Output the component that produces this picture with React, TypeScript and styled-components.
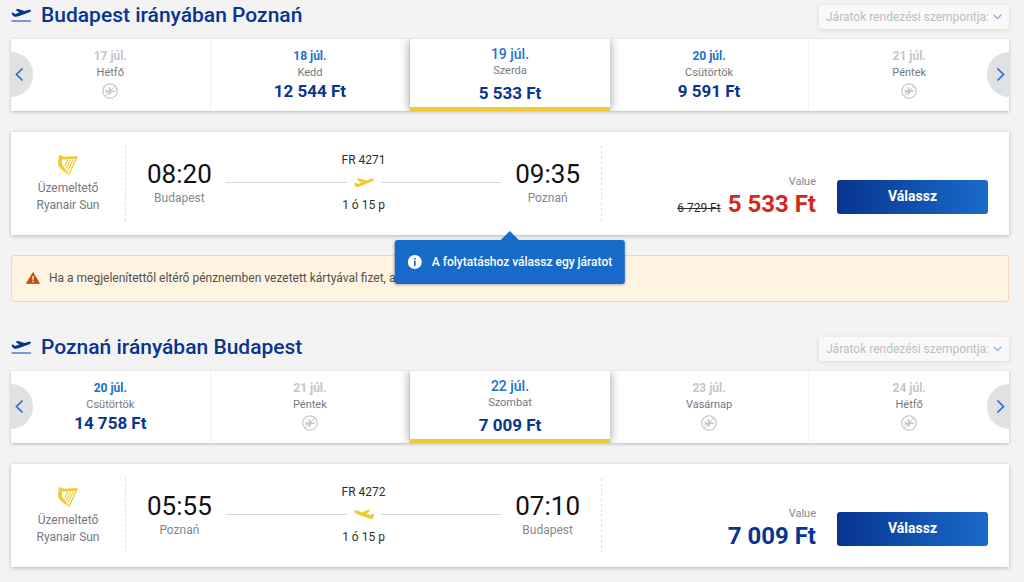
import React from "react";
import styled, { createGlobalStyle, css } from "styled-components";

const GlobalStyle = createGlobalStyle`
  * { box-sizing: border-box; }
  body {
    margin: 0;
    background: #f3f3f3;
    font-family: Roboto, "Liberation Sans", sans-serif;
    color: #2e2e2e;
  }
  h2, p { margin: 0; }
  button, select { font-family: inherit; }
`;

const Page = styled.main`
  display: flex;
  flex-direction: column;
  gap: 30px;
  padding: 0 15px 15px 11px;
`;

const Journey = styled.section`
  display: flex;
  flex-direction: column;
`;

const Header = styled.header`
  display: flex;
  align-items: flex-start;
  justify-content: space-between;
  height: 39px;
`;

const Title = styled.h2`
  display: flex;
  align-items: center;
  gap: 9px;
  padding-top: 2px;
  font-size: 21px;
  line-height: 26px;
  font-weight: 500;
  color: #073590;
`;

const SortBox = styled.label`
  display: flex;
  align-items: center;
  position: relative;
  margin-top: 5px;
  opacity: 0.5;
  border-radius: 2px;
  background: #fff;
  box-shadow: 0 1px 4px rgba(0, 0, 0, 0.2);

  svg {
    position: absolute;
    right: 7px;
    pointer-events: none;
  }
`;

const SortSelect = styled.select`
  appearance: none;
  width: 190px;
  height: 24px;
  padding: 0 12px 0 7px;
  border: 0;
  background: transparent;
  font-size: 12px;
  color: #84888f;
  opacity: 1;
`;

const Carousel = styled.div`
  position: relative;
  box-shadow: 0 1px 3px rgba(0, 0, 0, 0.25);
  background: #fff;
`;

const Days = styled.div`
  display: grid;
  grid-template-columns: repeat(5, 1fr);
  height: 72px;
  overflow: hidden;
`;

const Day = styled.button<{ $selected?: boolean }>`
  display: flex;
  flex-direction: column;
  align-items: center;
  padding: 8px 0 0;
  border: 0;
  border-right: 1px solid #f3f3f3;
  background: #fff;

  &:last-child { border-right: 0; }

  ${(p) =>
    p.$selected &&
    css`
      z-index: 1;
      padding-top: 6px;
      border-right: 0;
      border-bottom: 4px solid #f1c933;
      box-shadow: 0 0 10px rgba(0, 0, 0, 0.4);
    `}
`;

const DayDate = styled.span<{ $off?: boolean; $selected?: boolean }>`
  font-size: ${(p) => (p.$selected ? 14 : 12)}px;
  line-height: 18px;
  font-weight: ${(p) => (p.$selected ? 500 : 700)};
  color: ${(p) => (p.$off ? "#c3c6cb" : "#2070cd")};
`;

const DayName = styled.span`
  font-size: 11px;
  line-height: 15px;
  color: #75787f;
`;

const DayPrice = styled.span<{ $selected?: boolean }>`
  margin-top: ${(p) => (p.$selected ? 5 : 1)}px;
  font-size: 17px;
  line-height: 20px;
  font-weight: 700;
  color: #073590;
`;

const DayUnavailable = styled.span`
  display: flex;
  margin-top: 3px;
`;

const Arrow = styled.button<{ $side: "left" | "right" }>`
  position: absolute;
  z-index: 2;
  top: 13px;
  ${(p) => p.$side}: 0;
  display: flex;
  align-items: center;
  justify-content: ${(p) => (p.$side === "left" ? "flex-start" : "flex-end")};
  width: 22px;
  height: 45px;
  padding: 0 4px;
  border: 0;
  border-radius: ${(p) => (p.$side === "left" ? "0 22px 22px 0" : "22px 0 0 22px")};
  background: #e0e1e3;
`;

const FlightCard = styled.article`
  position: relative;
  display: flex;
  margin-top: 21px;
  height: 103px;
  padding: 14px 21px 14px 0;
  background: #fff;
  box-shadow: 0 1px 4px rgba(0, 0, 0, 0.25);
`;

const Operator = styled.div`
  display: flex;
  flex-direction: column;
  align-items: center;
  flex: 0 0 115px;
  padding-top: 8px;
  border-right: 1px dashed #dedfe1;
  font-size: 12px;
  line-height: 17px;
  color: #75787f;

  svg { margin-bottom: 4px; }
`;

const Route = styled.div`
  display: flex;
  flex: 1 1 476px;
  padding: 0 21px;
  gap: 14px;
  border-right: 1px dashed #dedfe1;
`;

const Stop = styled.div`
  display: flex;
  flex-direction: column;
  align-items: center;
  flex: 0 0 64px;
  padding-top: 13px;
`;

const Time = styled.time`
  font-size: 26px;
  line-height: 30px;
  color: #111;
`;

const City = styled.span`
  margin-top: 1px;
  font-size: 12px;
  line-height: 16px;
  color: #84888f;
`;

const Leg = styled.div`
  display: flex;
  flex-direction: column;
  align-items: center;
  flex: 1;
  padding-top: 6px;
  font-size: 12px;
  line-height: 16px;
`;

const Track = styled.div`
  display: flex;
  align-items: center;
  align-self: stretch;
  gap: 7px;
  height: 29px;

  &::before, &::after {
    content: "";
    flex: 1;
    height: 1px;
    background: #d5d7da;
  }
`;

const Fare = styled.div`
  display: flex;
  align-items: flex-end;
  justify-content: flex-end;
  flex: 1 1 386px;
  gap: 21px;
`;

const PriceBlock = styled.div`
  display: flex;
  flex-direction: column;
  align-items: flex-end;
  padding-bottom: 1px;
`;

const FareName = styled.span`
  font-size: 11px;
  line-height: 13px;
  color: #84888f;
`;

const PriceLine = styled.div`
  display: flex;
  align-items: baseline;
  gap: 7px;
`;

const OldPrice = styled.del`
  font-size: 12px;
  color: #2e2e2e;
`;

const Price = styled.strong<{ $sale?: boolean }>`
  font-size: 24px;
  line-height: 32px;
  font-weight: 700;
  color: ${(p) => (p.$sale ? "#d3281c" : "#073590")};
`;

const SelectButton = styled.button`
  width: 151px;
  height: 34px;
  margin-bottom: 7px;
  padding: 0 0 2px;
  border: 0;
  border-radius: 3px;
  background: linear-gradient(90deg, #073590, #1a6bc9);
  font-size: 14px;
  font-weight: 700;
  color: #fff;
`;

const Tooltip = styled.div`
  position: absolute;
  z-index: 3;
  top: calc(100% + 5px);
  left: 50%;
  transform: translateX(-50%);
  display: flex;
  align-items: center;
  gap: 9px;
  height: 44px;
  padding: 0 13px 0 12px;
  border-radius: 3px;
  background: #176ac8;
  box-shadow: 0 1px 3px rgba(0, 0, 0, 0.3);
  font-size: 12px;
  font-weight: 500;
  white-space: nowrap;
  color: #fff;

  &::before {
    content: "";
    position: absolute;
    bottom: 100%;
    left: 50%;
    margin-left: -9px;
    border: 9px solid transparent;
    border-top: 0;
    border-bottom-color: #176ac8;
  }
`;

const Alert = styled.div`
  display: flex;
  align-items: center;
  gap: 9px;
  height: 47px;
  margin-top: 20px;
  padding: 0 14px 2px;
  border: 1px solid #f2d6bb;
  border-radius: 3px;
  background: #fff3e2;
  font-size: 12px;
  line-height: 16px;
  color: #55504a;
`;

const TakeoffIcon = () => (
  <svg width="21" height="15" viewBox="0 0 21 15" aria-hidden="true">
    <path
      fill="#073590"
      d="M.5 5.1c.5-.6 1.2-.7 1.8-.3l1.9 1.1 4.1-1.3L4.8 1.9C5.3 1 6.5.7 7.4 1.1l6 2 3.5-1.1c1.4-.5 2.8-.4 3.1.3.2.8-.8 1.7-2.2 2.2L8.2 8c-1.6.6-3.9.9-5.2.4C1.7 7.900.9 6.500.5 5.100Z"
    />
    <path fill="#7e98cf" d="M.5 12h19.500v2H.5z" />
  </svg>
);

const PlaneIcon = ({ landing }: { landing?: boolean }) => (
  <svg width="20" height="11" viewBox="0 0 20 11" aria-hidden="true">
    <path
      fill="#f1c933"
      d={
        landing
          ? "M.3 2C.8 1.2 2 1.200 3.500 1.700L8.200 3.200 13.700.9C14.700.5 15.700.7 16.300 1.200L12.800 4.700 16.300 6 18.300 5C19.100 4.700 19.900 5.100 20 5.800L19.200 9.100C18.700 10.200 17.500 10.200 16 9.800L3.300 5.200C1.500 4.500.2 3.300.3 2Z"
          : "M.5 6.500C1 5.700 1.900 5.700 2.700 6.300L4.200 7 7.200 5.800 2.800 2.500C3.400 1.500 4.800 1.200 5.900 1.500L12.300 3.500 16.500 1.900C18 1.300 19.600 1.300 19.900 2.100 20.200 3 19.200 3.900 17.800 4.400L6.300 9.200C4.500 9.900 2.500 10.800 1.600 9.800 1 9.200.6 7.800.5 6.500Z"
      }
    />
  </svg>
);

const HarpIcon = () => (
  <svg width="22" height="22" viewBox="0 0 22 22" fill="none" aria-hidden="true">
    <path
      fill="#f1c933"
      d="M1.800 2.200C2.400.8 4.300.6 5 1.900 8 3.700 13.500 1.700 21.300 2.400 20.800 4.200 18.900 4.900 16.300 4.900 12.500 4.900 8.500 6.300 5.800 5.200 4.500 6.500 4.300 8.500 5.200 10.500 6.800 14 11 17 12.200 21.300 9 18 3.600 16.400 1.500 11.800.4 9 .9 6.600 2.100 4.700 1.200 4.200 1 3 1.800 2.200Z"
    />
    <path
      stroke="#f1c933"
      strokeWidth="1.100"
      d="M10.600 6 7.600 12.600M13.600 5.600 9.300 14.600M16.400 5.200 10.800 16.800"
    />
    <path stroke="#f1c933" strokeWidth="1.300" d="M19.400 4.200 12.100 20.400" />
  </svg>
);

const NoFlightIcon = () => (
  <svg width="16" height="16" viewBox="0 0 16 16" fill="none" aria-hidden="true">
    <circle cx="8" cy="8" r="7.200" stroke="#c3c6cb" strokeWidth="1.200" />
    <path
      fill="#c3c6cb"
      d="M3.500 6.500h1l.9 1h1.900L6.100 4.300h1.300l2.300 3.200h2.200c1.500 0 1.500 1.400 0 1.400H9.700l-2.300 3.200H6.100l1.200-3.200H5.400l-.9 1h-1l.4-1.700z"
    />
    <path stroke="#c3c6cb" d="M12.800 3.200 3.200 12.800" />
  </svg>
);

const Chevron = ({ dir }: { dir: "left" | "right" }) => (
  <svg width="9" height="15" viewBox="0 0 9 15" fill="none" aria-hidden="true">
    <path
      stroke="#2070cd"
      strokeWidth="1.700"
      d={dir === "left" ? "M7.500 1.500 1.500 7.500l6 6" : "M1.500 1.500l6 6-6 6"}
    />
  </svg>
);

const InfoIcon = () => (
  <svg width="16" height="16" viewBox="0 0 16 16" aria-hidden="true">
    <circle cx="8" cy="8" r="7" fill="#fff" />
    <path fill="#176ac8" d="M7.200 4h1.700v1.600H7.200zM7.200 6.700h1.700v5.200H7.200z" />
  </svg>
);

const WarningIcon = () => (
  <svg width="14" height="12" viewBox="0 0 14 12" aria-hidden="true">
    <path
      fill="#c04f0a"
      stroke="#c04f0a"
      strokeLinejoin="round"
      d="M7 .7 13.400 11.300H.6z"
    />
    <path fill="#fff3e2" d="M6.300 4h1.500v3.800H6.300zM6.300 8.700h1.500v1.500H6.300z" />
  </svg>
);

type DayInfo = { date: string; name: string; price?: string };

type JourneyInfo = {
  title: string;
  from: string;
  to: string;
  departs: string;
  arrives: string;
  flight: string;
  price: string;
  oldPrice?: string;
  landing?: boolean;
  days: DayInfo[];
};

const outbound: JourneyInfo = {
  title: "Budapest irányában Poznań",
  from: "Budapest",
  to: "Poznań",
  departs: "08:20",
  arrives: "09:35",
  flight: "FR 4271",
  price: "5 533 Ft",
  oldPrice: "6 729 Ft",
  days: [
    { date: "17 júl.", name: "Hétfő" },
    { date: "18 júl.", name: "Kedd", price: "12 544 Ft" },
    { date: "19 júl.", name: "Szerda", price: "5 533 Ft" },
    { date: "20 júl.", name: "Csütörtök", price: "9 591 Ft" },
    { date: "21 júl.", name: "Péntek" },
  ],
};

const inbound: JourneyInfo = {
  title: "Poznań irányában Budapest",
  from: "Poznań",
  to: "Budapest",
  departs: "05:55",
  arrives: "07:10",
  flight: "FR 4272",
  price: "7 009 Ft",
  landing: true,
  days: [
    { date: "20 júl.", name: "Csütörtök", price: "14 758 Ft" },
    { date: "21 júl.", name: "Péntek" },
    { date: "22 júl.", name: "Szombat", price: "7 009 Ft" },
    { date: "23 júl.", name: "Vasárnap" },
    { date: "24 júl.", name: "Hétfő" },
  ],
};

function JourneySection({
  info,
  hint,
  children,
}: {
  info: JourneyInfo;
  hint?: string;
  children?: React.ReactNode;
}) {
  return (
    <Journey>
      <Header>
        <Title>
          <TakeoffIcon />
          {info.title}
        </Title>
        <SortBox>
          <SortSelect disabled aria-label="Járatok rendezési szempontja">
            <option>Járatok rendezési szempontja:</option>
          </SortSelect>
          <svg width="9" height="6" viewBox="0 0 9 6" fill="none" aria-hidden="true">
            <path stroke="#2070cd" strokeWidth="1.300" d="M.7.800 4.500 4.600 8.300.8" />
          </svg>
        </SortBox>
      </Header>
      <Carousel>
        <Arrow $side="left" aria-label="Előző">
          <Chevron dir="left" />
        </Arrow>
        <Days>
          {info.days.map((day, i) => (
            <Day key={day.date} $selected={i === 2} disabled={!day.price}>
              <DayDate $off={!day.price} $selected={i === 2}>
                {day.date}
              </DayDate>
              <DayName>{day.name}</DayName>
              {day.price ? (
                <DayPrice $selected={i === 2}>{day.price}</DayPrice>
              ) : (
                <DayUnavailable>
                  <NoFlightIcon />
                </DayUnavailable>
              )}
            </Day>
          ))}
        </Days>
        <Arrow $side="right" aria-label="Következő">
          <Chevron dir="right" />
        </Arrow>
      </Carousel>
      <FlightCard>
        <Operator>
          <HarpIcon />
          <span>Üzemeltető</span>
          <span>Ryanair Sun</span>
        </Operator>
        <Route>
          <Stop>
            <Time>{info.departs}</Time>
            <City>{info.from}</City>
          </Stop>
          <Leg>
            <span>{info.flight}</span>
            <Track>
              <PlaneIcon landing={info.landing} />
            </Track>
            <span>1 ó 15 p</span>
          </Leg>
          <Stop>
            <Time>{info.arrives}</Time>
            <City>{info.to}</City>
          </Stop>
        </Route>
        <Fare>
          <PriceBlock>
            <FareName>Value</FareName>
            <PriceLine>
              {info.oldPrice && <OldPrice>{info.oldPrice}</OldPrice>}
              <Price $sale={Boolean(info.oldPrice)}>{info.price}</Price>
            </PriceLine>
          </PriceBlock>
          <SelectButton>Válassz</SelectButton>
        </Fare>
        {hint && (
          <Tooltip role="tooltip">
            <InfoIcon />
            {hint}
          </Tooltip>
        )}
      </FlightCard>
      {children}
    </Journey>
  );
}

export default function App() {
  return (
    <>
      <GlobalStyle />
      <Page>
        <JourneySection info={outbound} hint="A folytatáshoz válassz egy járatot">
          <Alert role="alert">
            <WarningIcon />
            <p>Ha a megjelenítettől eltérő pénznemben vezetett kártyával fizet, a</p>
          </Alert>
        </JourneySection>
        <JourneySection info={inbound} />
      </Page>
    </>
  );
}
